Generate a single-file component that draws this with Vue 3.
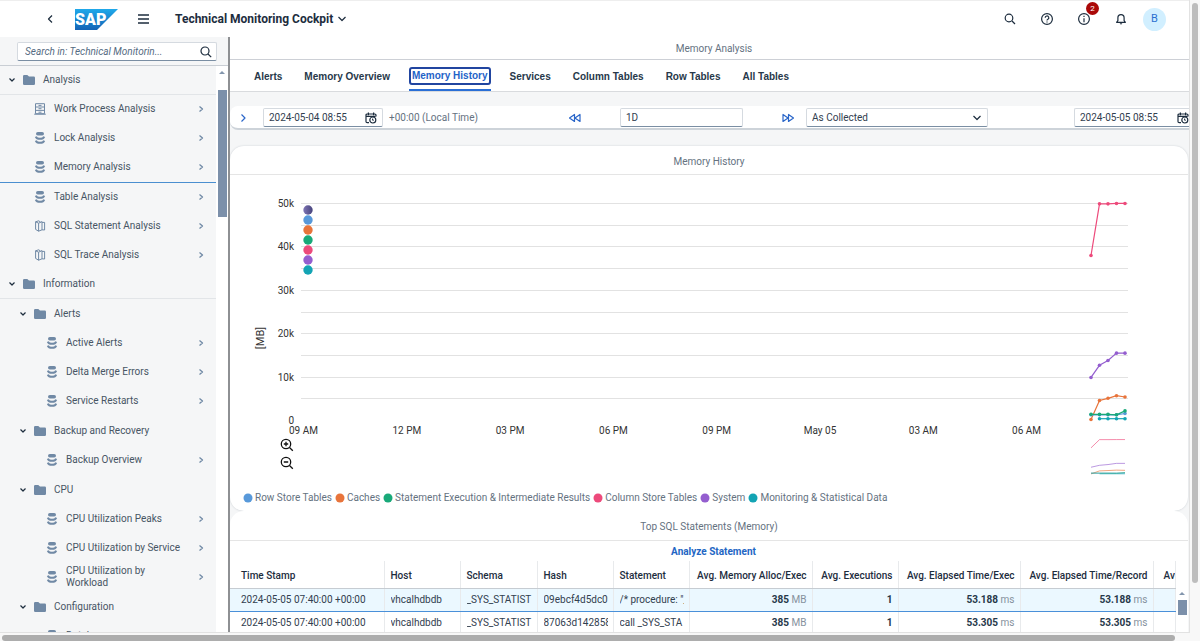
<script setup>
import { ref } from 'vue'

const tree = [
  { label: 'Analysis', level: 0, icon: 'folder', line: 'soft' },
  { label: 'Work Process Analysis', level: 1, icon: 'process' },
  { label: 'Lock Analysis', level: 1, icon: 'db' },
  { label: 'Memory Analysis', level: 1, icon: 'db', line: 'active' },
  { label: 'Table Analysis', level: 1, icon: 'db' },
  { label: 'SQL Statement Analysis', level: 1, icon: 'copy' },
  { label: 'SQL Trace Analysis', level: 1, icon: 'copy' },
  { label: 'Information', level: 0, icon: 'folder', line: 'soft' },
  { label: 'Alerts', level: 1, icon: 'folder' },
  { label: 'Active Alerts', level: 2, icon: 'db' },
  { label: 'Delta Merge Errors', level: 2, icon: 'db' },
  { label: 'Service Restarts', level: 2, icon: 'db' },
  { label: 'Backup and Recovery', level: 1, icon: 'folder' },
  { label: 'Backup Overview', level: 2, icon: 'db' },
  { label: 'CPU', level: 1, icon: 'folder' },
  { label: 'CPU Utilization Peaks', level: 2, icon: 'db' },
  { label: 'CPU Utilization by Service', level: 2, icon: 'db' },
  { label: 'CPU Utilization by Workload', level: 2, icon: 'db' },
  { label: 'Configuration', level: 1, icon: 'folder' },
  { label: 'Database', level: 2, icon: 'db' }
]

const tabs = ['Alerts', 'Memory Overview', 'Memory History', 'Services', 'Column Tables', 'Row Tables', 'All Tables']
const activeTab = ref('Memory History')

const from = ref('2024-05-04 08:55')
const to = ref('2024-05-05 08:55')
const span = ref('1D')
const search = ref('')

const series = [
  { name: 'Row Store Tables', color: '#5899da', start: 0, values: [1.2, 1.2, 1.2, 1.2, 1.5] },
  { name: 'Caches', color: '#e8743b', start: 0, values: [0.1, 4.5, 5.0, 5.6, 5.3] },
  { name: 'Statement Execution & Intermediate Results', color: '#19a979', start: 0, values: [1.3, 1.3, 1.3, 1.2, 2.1] },
  { name: 'Column Store Tables', color: '#ed4a7b', start: 0, values: [37.9, 49.8, 49.8, 49.9, 49.9] },
  { name: 'System', color: '#945ecf', start: 0, values: [9.8, 12.6, 13.7, 15.4, 15.4] },
  { name: 'Monitoring & Statistical Data', color: '#13a4b4', start: 1, values: [0.3, 0.3, 0.3, 0.3] }
]
const drawOrder = [3, 4, 1, 0, 5, 2].map((i) => series[i])
const markers = ['#5e5a96', ...series.map((s) => s.color)]

const px = (i) => 861 + i * 8.5
const y = (v) => 245 - v * 4.34
const miniY = (v) => 299 - v * 0.69
const line = (s, scale) => s.values.map((v, i) => `${px(i + s.start)},${scale(v)}`).join(' ')

const grid = [5, 10, 15, 20, 25, 30, 35, 40, 45, 50]
const yLabels = [0, 10, 20, 30, 40, 50]
const xLabels = ['09 AM', '12 PM', '03 PM', '06 PM', '09 PM', 'May 05', '03 AM', '06 AM']

const columns = ['Time Stamp', 'Host', 'Schema', 'Hash', 'Statement', 'Avg. Memory Alloc/Exec', 'Avg. Executions', 'Avg. Elapsed Time/Exec', 'Avg. Elapsed Time/Record', 'Av']
const rows = [
  { time: '2024-05-05 07:40:00 +00:00', host: 'vhcalhdbdb', schema: '_SYS_STATIST', hash: '09ebcf4d5dc09', stmt: '/* procedure: "_', mem: '385', exec: '1', ms: '53.188' },
  { time: '2024-05-05 07:40:00 +00:00', host: 'vhcalhdbdb', schema: '_SYS_STATIST', hash: '87063d142858', stmt: 'call _SYS_STA', mem: '385', exec: '1', ms: '53.305' }
]
</script>

<template>
  <div class="app">
    <div class="shell">
      <header class="header">
        <button class="icon-btn back" aria-label="Back">
          <svg width="12" height="12" viewBox="0 0 12 12"><path d="M8 2.5 4.5 6 8 9.5" class="stroke" /></svg>
        </button>
        <svg class="logo" width="43" height="21" viewBox="0 0 43 21" role="img" aria-label="SAP">
          <defs>
            <linearGradient id="sapBlue" x1="0" y1="0" x2="0" y2="1">
              <stop offset="0" stop-color="#1fa9ea" />
              <stop offset="1" stop-color="#1463b6" />
            </linearGradient>
          </defs>
          <path d="M0 0H43L22 21H0Z" fill="url(#sapBlue)" />
          <text x="0" y="16" class="logo-text">SAP</text>
        </svg>
        <button class="icon-btn menu" aria-label="Menu">
          <svg width="14" height="12" viewBox="0 0 14 12"><path d="M1 2h11M1 6h11M1 10h11" class="stroke thick" /></svg>
        </button>
        <button class="title">
          Technical Monitoring Cockpit
          <svg width="10" height="10" viewBox="0 0 10 10"><path d="M1.5 3 5 6.5 8.5 3" class="stroke" /></svg>
        </button>
        <div class="tools">
          <button class="icon-btn" aria-label="Search">
            <svg width="14" height="14" viewBox="0 0 14 14"><circle cx="6" cy="6" r="3.8" class="stroke" /><path d="m9 9 3 3" class="stroke" /></svg>
          </button>
          <button class="icon-btn" aria-label="Help">
            <svg width="14" height="14" viewBox="0 0 14 14"><circle cx="7" cy="7" r="5.4" class="stroke" /><path d="M5.2 5.8a1.8 1.8 0 1 1 2.7 1.5c-.6.3-.9.6-.9 1.2M7 9.6v1" class="stroke" /></svg>
          </button>
          <button class="icon-btn" aria-label="Information, 2 messages">
            <svg width="14" height="14" viewBox="0 0 14 14"><circle cx="7" cy="7" r="5.4" class="stroke" /><path d="M7 6.2v4M7 3.8v1.2" class="stroke" /></svg>
            <span class="badge">2</span>
          </button>
          <button class="icon-btn" aria-label="Notifications">
            <svg width="14" height="14" viewBox="0 0 14 14"><path d="M2.6 10.3 3.9 8.6V5.8a3.1 3.1 0 0 1 6.2 0v2.8l1.3 1.7Z" class="stroke" /><path d="M5.6 11.2h2.8L7 12.8Z" fill="#1d2d3e" /></svg>
          </button>
          <button class="avatar" aria-label="User profile">B</button>
        </div>
      </header>

      <div class="body">
        <aside class="sidebar">
          <div class="search-row">
            <label class="field search">
              <input v-model="search" type="text" placeholder="Search in: Technical Monitorin..." aria-label="Search in Technical Monitoring" />
              <svg width="14" height="14" viewBox="0 0 14 14"><circle cx="6" cy="6" r="4" class="stroke" /><path d="m9 9 3.2 3.2" class="stroke" /></svg>
            </label>
          </div>
          <div class="tree-wrap">
            <nav class="tree" aria-label="Applications">
              <a v-for="n in tree" :key="n.label" href="#" class="node" :class="['level' + n.level, n.line, { group: n.icon === 'folder' }]">
                <svg v-if="n.icon === 'folder'" class="expander" width="8" height="8" viewBox="0 0 8 8"><path d="M1.5 2.5 4 5l2.5-2.5" class="stroke" /></svg>
                <svg v-if="n.icon === 'folder'" class="glyph" width="12" height="12" viewBox="0 0 12 12"><path d="M0 2.2Q0 1 1.2 1H4.3L6 2.6h4.8Q12 2.6 12 3.8V9.8Q12 11 10.8 11H1.2Q0 11 0 9.8Z" fill="#7089a5" /></svg>
                <svg v-else-if="n.icon === 'db'" class="glyph" width="12" height="12" viewBox="0 0 12 12"><rect x="2" y="0" width="8" height="3.6" rx="1.8" fill="#7089a5" /><path d="M1.8 4.6Q2.6 6.8 6 6.8t4.2-2.2M1.8 8.6Q2.6 10.8 6 10.8t4.2-2.2" class="slate disc" /></svg>
                <svg v-else-if="n.icon === 'process'" class="glyph" width="12" height="12" viewBox="0 0 12 12"><path d="M1.5 .7h9v10h-9ZM.2 11.2h11.6M1.5 4h9M1.5 7.4h9M4.5 2.4h3M4.5 5.7h3M4.5 9.2h3" class="slate thin" /></svg>
                <svg v-else class="glyph" width="12" height="12" viewBox="0 0 12 12"><path d="M4.6 3.2 8 1.6V9.8l-3.4 1.4ZM4.6 3.2 1.6 1.8V9.4l3 1.8M1.6 1.8 4.8.8 6.6 2.2M8 2.4h2.6V10L8 9.8" class="slate thin" /></svg>
                <span class="label">{{ n.label }}</span>
                <svg v-if="n.icon !== 'folder'" class="go" width="8" height="8" viewBox="0 0 8 8"><path d="m2.5 1.5 3 2.5-3 2.5" class="slate" /></svg>
              </a>
            </nav>
            <div class="vbar"><i class="up"></i><i class="thumb"></i></div>
          </div>
        </aside>

        <main class="content">
          <h1 class="page-title">Memory Analysis</h1>
          <nav class="tabs" role="tablist">
            <button v-for="t in tabs" :key="t" class="tab" :class="{ on: t === activeTab }" role="tab" :aria-selected="t === activeTab" @click="activeTab = t"><span>{{ t }}</span></button>
          </nav>

          <div class="toolbar">
            <button class="icon-btn expand" aria-label="Expand">
              <svg width="10" height="10" viewBox="0 0 10 10"><path d="m3.5 1.5 3.5 3.5-3.5 3.5" class="stroke blue" /></svg>
            </button>
            <label class="field date">
              <input v-model="from" type="text" aria-label="From" />
              <svg width="12" height="12" viewBox="0 0 12 12"><path d="M4 10.7H2.2Q1 10.7 1 9.5V3Q1 2 2.2 2h7.6Q11 2 11 3v1.6M3.4.6v2.6M8.6.6v2.6M1.4 4.4h9" class="stroke" /><circle cx="7.8" cy="8" r="3" class="stroke" /><path d="M7.6 6.6v1.6h1.2" class="stroke fine" /></svg>
            </label>
            <span class="zone">+00:00 (Local Time)</span>
            <button class="icon-btn rewind" aria-label="Previous period">
              <svg width="14" height="10" viewBox="0 0 14 10"><path d="M6.5 1.5v7L1.5 5ZM12 1.5v7L7 5Z" class="stroke blue" /></svg>
            </button>
            <label class="field span"><input v-model="span" type="text" aria-label="Period" /></label>
            <button class="icon-btn forward" aria-label="Next period">
              <svg width="14" height="10" viewBox="0 0 14 10"><path d="M2 1.5v7L7 5ZM7.5 1.5v7l5-3.5Z" class="stroke blue" /></svg>
            </button>
            <label class="field pick">
              <select aria-label="Resolution"><option>As Collected</option></select>
              <svg width="10" height="10" viewBox="0 0 10 10"><path d="M1.5 3 5 6.5 8.5 3" class="stroke" /></svg>
            </label>
            <label class="field date end">
              <input v-model="to" type="text" aria-label="To" />
              <svg width="12" height="12" viewBox="0 0 12 12"><path d="M4 10.7H2.2Q1 10.7 1 9.5V3Q1 2 2.2 2h7.6Q11 2 11 3v1.6M3.4.6v2.6M8.6.6v2.6M1.4 4.4h9" class="stroke" /><circle cx="7.8" cy="8" r="3" class="stroke" /><path d="M7.6 6.6v1.6h1.2" class="stroke fine" /></svg>
            </label>
          </div>

          <section class="card chart-card">
            <h2>Memory History</h2>
            <div class="chart">
              <svg class="plot" viewBox="0 0 958 311" role="img" aria-label="Memory history in megabytes">
                <defs>
                  <linearGradient id="allSeries" x1="0" y1="0" x2="1" y2="0">
                    <stop offset="0" stop-color="#7f74b4" />
                    <stop offset="1" stop-color="#46447c" />
                  </linearGradient>
                </defs>
                <path v-for="g in grid" :key="g" :d="`M71 ${Math.round(y(g)) + 0.5}H898`" class="grid" />
                <text v-for="l in yLabels" :key="'y' + l" x="64" :y="y(l) + 4" text-anchor="end" class="axis">{{ l ? l + 'k' : '0' }}</text>
                <text v-for="(l, i) in xLabels" :key="l" :x="73.5 + i * 103.3" y="259" text-anchor="middle" class="axis">{{ l }}</text>
                <text transform="translate(34 163) rotate(-90)" text-anchor="middle" class="axis unit">[MB]</text>
                <circle v-for="(c, i) in markers" :key="'m' + i" cx="78" :cy="35 + i * 10" r="4.7" :fill="i ? c : 'url(#allSeries)'" />
                <g v-for="s in drawOrder" :key="s.name" :stroke="s.color" :fill="s.color">
                  <polyline :points="line(s, y)" class="line" />
                  <circle v-for="(v, i) in s.values" :key="i" :cx="px(i + s.start)" :cy="y(v)" r="1.8" stroke="none" />
                  <polyline :points="line(s, miniY)" class="line mini" />
                </g>
              </svg>
              <div class="zoom">
                <button class="icon-btn" aria-label="Zoom in">
                  <svg width="14" height="14" viewBox="0 0 14 14"><circle cx="6" cy="6" r="4.7" class="dark" /><path d="m9.5 9.5 3.3 3.3M3.8 6h4.4M6 3.8v4.4" class="dark" /></svg>
                </button>
                <button class="icon-btn" aria-label="Zoom out">
                  <svg width="14" height="14" viewBox="0 0 14 14"><circle cx="6" cy="6" r="4.7" class="dark" /><path d="m9.5 9.5 3.3 3.3M3.8 6h4.4" class="dark" /></svg>
                </button>
              </div>
            </div>
            <ul class="legend">
              <li v-for="s in series" :key="s.name">
                <svg width="10" height="10" viewBox="0 0 10 10"><circle cx="5" cy="5" r="4.5" :fill="s.color" /></svg>{{ s.name }}
              </li>
            </ul>
          </section>

          <section class="card table-card">
            <h2>Top SQL Statements (Memory)</h2>
            <div class="actions"><button class="link">Analyze Statement</button></div>
            <div class="table-wrap">
              <table>
                <colgroup>
                  <col class="c-time" /><col class="c-s" /><col class="c-m" /><col class="c-s" /><col class="c-s" /><col class="c-mem" /><col class="c-exec" /><col class="c-el" /><col class="c-rec" /><col />
                </colgroup>
                <thead>
                  <tr><th v-for="(c, i) in columns" :key="c" scope="col" :class="{ num: i > 4 && i < 9 }">{{ c }}</th></tr>
                </thead>
                <tbody>
                  <tr v-for="(r, i) in rows" :key="r.hash" :class="{ selected: i === 0 }">
                    <td><div>{{ r.time }}</div></td>
                    <td><div>{{ r.host }}</div></td>
                    <td><div>{{ r.schema }}</div></td>
                    <td><div>{{ r.hash }}</div></td>
                    <td><div>{{ r.stmt }}</div></td>
                    <td class="num"><b>{{ r.mem }}</b> <span>MB</span></td>
                    <td class="num"><b>{{ r.exec }}</b></td>
                    <td class="num"><b>{{ r.ms }}</b> <span>ms</span></td>
                    <td class="num"><b>{{ r.ms }}</b> <span>ms</span></td>
                    <td></td>
                  </tr>
                </tbody>
              </table>
              <div class="vbar small"><i class="up"></i><i class="thumb"></i></div>
            </div>
          </section>
        </main>
      </div>
    </div>
    <div class="page-v"><i></i></div>
    <div class="page-h"><i></i></div>
  </div>
</template>

<style>
body { margin: 0; }
</style>

<style scoped>
* { box-sizing: border-box; }
.app {
  display: grid;
  grid-template-columns: minmax(0, 1fr) 11px;
  grid-template-rows: minmax(0, 1fr) 8px;
  height: 100vh;
  overflow: hidden;
  background: #f8f8f8;
  color: #32404f;
  font: 10px/12px Roboto, "Liberation Sans", sans-serif;
}
button, input, select { font: inherit; color: inherit; margin: 0; padding: 0; border: 0; background: none; }
svg { display: block; flex: none; overflow: visible; }
.stroke, .slate, .dark { fill: none; stroke: #1d2d3e; stroke-width: 1.2; stroke-linejoin: round; }
.slate { stroke: #7089a5; stroke-width: 1.3; }
.disc { stroke-width: 2; }
.thin { stroke-width: 1; }
.fine { stroke-width: 1; }
.thick { stroke-width: 1.6; }
.dark { stroke: #111; stroke-width: 1.3; }
.blue { stroke: #2a66c9; }

.shell { display: flex; flex-direction: column; min-width: 0; overflow: hidden; border-bottom: 1px solid #e2e2e2; background: #fff; }
.header { display: flex; align-items: center; flex: none; height: 37px; padding: 0 23px 0 43px; border-top: 1px solid #eee; }
.icon-btn { display: flex; align-items: center; justify-content: center; position: relative; width: 14px; height: 14px; flex: none; }
.logo { margin-left: 18px; }
.logo-text { font: 900 16px Roboto, sans-serif; fill: #fff; }
.menu { margin-left: 19px; }
.title { display: flex; align-items: center; gap: 4px; margin-left: 24px; font-weight: 700; font-size: 12px; color: #1d2d3e; }
.tools { display: flex; align-items: center; gap: 23px; margin-left: auto; }
.badge { position: absolute; left: 9px; top: -10px; width: 13px; height: 13px; border-radius: 50%; background: #aa0808; color: #fff; font-size: 8px; line-height: 13px; text-align: center; }
.avatar { width: 23px; height: 23px; margin-left: -8px; border-radius: 50%; background: #d1efff; color: #2a6fd0; font-size: 11px; }

.body { display: flex; flex: 1; min-height: 0; }
.sidebar { display: flex; flex-direction: column; flex: none; width: 230px; border-right: 2px solid #8e9093; background: #f5f6f7; }
.search-row { flex: none; padding: 5px 11px 4px 17px; height: 29px; border-bottom: 1px solid #c9ced4; }
.field { display: flex; align-items: center; height: 19px; border: 1px solid #d5dae0; border-bottom-color: #7a8ea3; border-radius: 2px; background: #fff; }
.field input { flex: 1; min-width: 0; width: 100%; outline: none; }
.search { padding: 0 3px 0 7px; }
.search input::placeholder { color: #556b82; font-style: italic; opacity: 1; }
.tree-wrap { display: flex; flex: 1; min-height: 0; }
.tree { flex: 1; min-width: 0; overflow: hidden; }
.node { display: flex; align-items: center; min-height: 29px; padding: 2px 11px 3px 34px; color: #475564; text-decoration: none; }
.node.level2 { padding-left: 46px; }
.node.group { padding-left: 8px; }
.node.group.level1 { min-height: 30px; padding-left: 19px; }
.node.soft { border-bottom: 1px solid #e2e5e8; }
.node.active { min-height: 30px; border-bottom: 1px solid #4a8fd0; }
.expander { margin-right: 7px; }
.label { flex: 1; margin: 0 16px 0 8px; }
.vbar { display: flex; flex-direction: column; align-items: center; flex: none; width: 12px; background: #fff; }
.up { margin: 5px 0 0; border: 3px solid transparent; border-top: 0; border-bottom: 3px solid #8396ad; }
.vbar .thumb { width: 9px; height: 127px; margin-top: 16px; background: #7c90aa; }

.content { display: flex; flex-direction: column; flex: 1; min-width: 0; overflow: hidden; background: #f5f6f7; }
h1, h2 { margin: 0; font-size: 10px; font-weight: 400; text-align: center; color: #65727f; }
.page-title { flex: none; height: 23px; padding-left: 9px; line-height: 23px; border-bottom: 1px solid #cdd0d6; background: #fff; }
.tabs { display: flex; flex: none; gap: 22px; height: 32px; padding-left: 24px; border-bottom: 1px solid #d9dbde; background: #fff; }
.tab { padding: 1px 0 0; font: 700 10px "Liberation Sans", sans-serif; color: #27384a; white-space: nowrap; }
.tab.on { display: flex; align-items: center; margin: 0 -3px; padding: 3px 0 0; border-bottom: 2px solid #2a6fd6; color: #1f63c8; }
.tab.on span { padding: 1px; border: 2px solid #2145a0; border-radius: 3px; line-height: 12px; }

.toolbar { display: flex; align-items: center; flex: none; height: 24px; margin-top: 14px; padding: 1px 0 0 6px; border-bottom: 2px solid #cdd3d9; border-radius: 8px 0 0 8px; background: #fff; overflow: hidden; }
.date { width: 120px; margin-left: 13px; padding: 0 5px; flex: none; }
.zone { margin-left: 6px; color: #65727f; white-space: nowrap; }
.rewind { margin-left: auto; }
.span { flex: none; width: 123px; margin-left: 38px; padding: 0 5px; }
.forward { margin-left: 38px; }
.pick { flex: none; position: relative; width: 182px; margin-left: 11px; padding: 0 5px 0 5px; }
.pick select { flex: 1; appearance: none; outline: none; }
.end { width: 115px; margin-left: 86px; padding-right: 0; border-right: 0; border-radius: 2px 0 0 2px; }

.card { flex: none; margin-right: 1px; background: #fff; }
.chart-card { margin-top: 16px; border-radius: 14px; box-shadow: 0 0 2px #c8cdd2; }
.card h2 { height: 29px; line-height: 31px; border-bottom: 1px solid #e5e5e5; }
.chart { position: relative; }
.plot { width: 100%; height: auto; }
.grid { stroke: #e2e2e2; stroke-width: 1; }
.axis { font: 10px Roboto, sans-serif; fill: #333; }
.unit { font-size: 11px; }
.line { fill: none; stroke-width: 1.2; }
.mini { stroke-width: 0.8; opacity: 0.8; }
.zoom { position: absolute; left: 50px; top: 263px; display: flex; flex-direction: column; gap: 4px; }
.legend { display: flex; flex-wrap: wrap; gap: 3px; margin: 0; padding: 6px 13px 7px; list-style: none; color: #65727f; }
.legend li { display: flex; align-items: center; gap: 2px; }

.table-card { border-radius: 14px 14px 0 0; }
.table-card h2 { height: 30px; }
.actions { display: flex; justify-content: center; padding: 5px 0 3px 9px; }
.link { font-weight: 700; color: #2366c4; }
.table-wrap { display: flex; }
table { flex: 1; min-width: 0; width: 0; table-layout: fixed; border-collapse: collapse; }
.c-time { width: 154px; }
.c-s { width: 76px; }
.c-m { width: 77px; }
.c-mem { width: 123px; }
.c-exec { width: 86px; }
.c-el { width: 122px; }
.c-rec { width: 133px; }
th, td { height: 24px; padding: 0 5px 0 6px; border-right: 1px solid #e8eaec; overflow: hidden; white-space: nowrap; text-align: left; font-weight: 400; }
td div { overflow: hidden; }
th { height: 27px; padding-top: 3px; font-weight: 500; color: #1d2d3e; border-bottom: 1px solid #c6ccd2; }
th:first-child, td:first-child { padding-left: 11px; }
th:last-child, td:last-child { padding-left: 10px; padding-right: 0; }
.num { text-align: right; }
td b { font-weight: 700; color: #27384a; }
td span { color: #85919d; }
.selected td { height: 23px; background: #ebf8ff; border-bottom: 1px solid #4a90d9; }
.small { padding-top: 26px; }
.small .thumb { height: 15px; margin-top: 5px; }

.page-v { display: flex; justify-content: center; padding-top: 3px; border-left: 1px solid #e2e2e2; }
.page-v i { width: 6px; height: 92%; border-radius: 3px; background: #bdbdbd; }
.page-h { padding: 2px 2px 0; }
.page-h i { display: block; width: 99%; height: 6px; border-radius: 3px; background: #adadad; }
</style>
